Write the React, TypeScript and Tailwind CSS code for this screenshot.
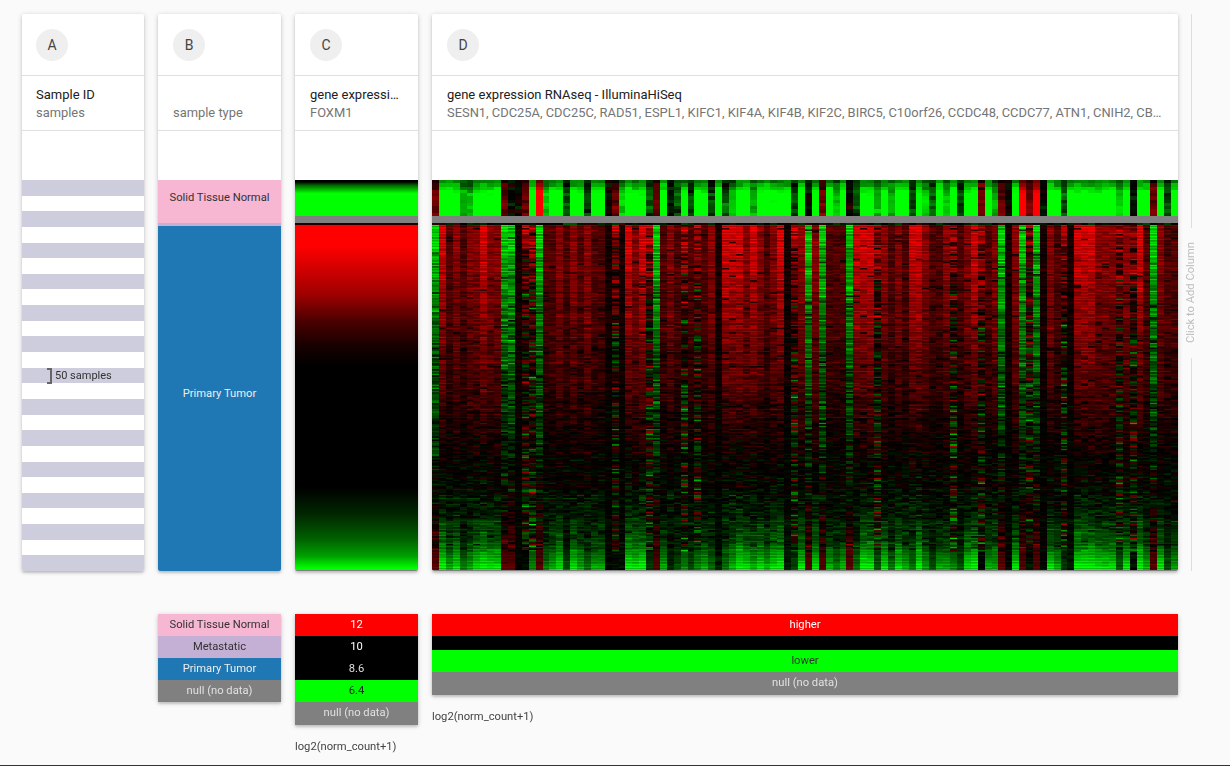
import { useEffect, useRef, type ReactNode } from "react";

const genes =
	"SESN1, CDC25A, CDC25C, RAD51, ESPL1, KIFC1, KIF4A, KIF4B, KIF2C, BIRC5, C10orf26, CCDC48, CCDC77, ATN1, CNIH2, CBX2, CENPA, CDCA5, TPX2, UBE2C";

// one char per heatmap column, read off the reference
const normalCols =
	"rGGGggGGGGrkkrGRgGGdGGdGGkrgGGGdrGkd" +
	"GdGGdGdgGGgGGGGGdGkGrGgGkdGGgGgGGdGgd" +
	"GgGdGGrGgrkGRrRkGGdGGGGGGGgGkGGrGdG";
const tumorCols =
	"LSDMDMMSMMLLKXXLDDMDMDMDDKXKSMSXLDMD" +
	"XDXDMKSSSMSMDMSKXMLMLDDDLSSSXMDMDSSMD" +
	"DMXDMSXDMLKMLXLKMDXKSSSMMMXMXSDLMDD";

const curveStops = [0, 0.1, 0.3, 0.5, 0.7, 0.85, 0.93, 1];
const curves: Record<string, { v: number[]; noise: number }> = {
	S: { v: [1, 0.82, 0.56, 0.3, 0.03, -0.18, -0.4, -0.95], noise: 0.17 },
	M: { v: [0.62, 0.55, 0.42, 0.25, 0.03, -0.15, -0.35, -0.85], noise: 0.15 },
	D: { v: [0.36, 0.34, 0.28, 0.15, 0, -0.1, -0.22, -0.65], noise: 0.13 },
	K: { v: [0.12, 0.1, 0.08, 0.03, 0, -0.03, -0.06, -0.12], noise: 0.07 },
	X: { v: [0.7, 0.35, 0.08, 0, 0, -0.05, -0.2, -0.5], noise: 0.5 },
	L: { v: [-0.95, -0.72, -0.48, -0.28, -0.1, 0.08, 0.22, 0.4], noise: 0.26 },
};
const normalLevels: Record<string, number> = {
	G: -1.2,
	g: -0.75,
	d: -0.3,
	k: -0.02,
	r: 0.42,
	R: 1.05,
};
// how far the last tumor rows go green, by the column's normal level
const bottomFactor: Record<string, number> = {
	G: 1.2,
	g: 0.85,
	d: 0.55,
	k: 0.2,
	r: 0.1,
	R: 0.1,
};

function rng(seed: number) {
	let a = seed;
	return () => {
		a = (a + 0x6d2b79f5) | 0;
		let t = Math.imul(a ^ (a >>> 15), 1 | a);
		t = (t + Math.imul(t ^ (t >>> 7), 61 | t)) ^ t;
		return ((t ^ (t >>> 14)) >>> 0) / 4294967296;
	};
}

function curveAt(values: number[], t: number) {
	for (let i = 1; i < curveStops.length; i++) {
		if (t <= curveStops[i]) {
			const f = (t - curveStops[i - 1]) / (curveStops[i] - curveStops[i - 1]);
			return values[i - 1] + (values[i] - values[i - 1]) * f;
		}
	}
	return values[values.length - 1];
}

function cellColor(v: number) {
	const c = Math.round(Math.min(1, Math.abs(v)) * 255);
	return v > 0 ? `rgb(${c},0,0)` : `rgb(0,${c},0)`;
}

const Heatmap = () => {
	const ref = useRef<HTMLCanvasElement>(null);

	useEffect(() => {
		const ctx = ref.current?.getContext("2d");
		if (!ctx) return;
		const rand = rng(42);
		const gauss = () => (rand() + rand() + rand() - 1.5) * 1.15;
		const width = 746;
		const colW = width / 108;
		const rows = 225;
		const pitch = 345 / rows;
		const rowShift = Array.from({ length: rows }, () => gauss() * 0.05);
		ctx.fillStyle = "#000";
		ctx.fillRect(0, 0, width, 391);

		for (let c = 0; c < 108; c++) {
			const x = Math.round(c * colW);
			const w = Math.round((c + 1) * colW) - x;
			const kind = normalCols[c];

			// normal samples
			const level = normalLevels[kind] * (0.92 + rand() * 0.22);
			for (let r = 0; r < 11; r++) {
				const ramp = Math.min(1, 0.42 + r * 0.14);
				const jitter = gauss() * (Math.abs(level) < 0.8 ? 0.18 : 0.12);
				ctx.fillStyle = cellColor(level * ramp + (level > 0 ? jitter : -jitter));
				ctx.fillRect(x, Math.round(r * 3.27), w, 4);
			}

			// null band
			ctx.fillStyle = "#808080";
			ctx.fillRect(x, 36, w, 7);

			// metastatic sample
			ctx.fillStyle = cellColor(gauss() * 0.25);
			ctx.fillRect(x, 43, w, 2);

			// tumor samples
			const curve = curves[tumorCols[c]];
			for (let r = 0; r < rows; r++) {
				const t = r / (rows - 1);
				let base = curveAt(curve.v, t);
				if (t > 0.85 && base < 0) base *= bottomFactor[kind];
				let v = base + rowShift[r] + gauss() * curve.noise;
				if (rand() < 0.03) v *= 0.2;
				if (t > 0.95) v = base + gauss() * 0.08;
				ctx.fillStyle = cellColor(v);
				ctx.fillRect(x, 45 + r * pitch, w, pitch);
			}

			ctx.fillStyle = "#808080";
			ctx.fillRect(x, 390, w, 1);
		}
	}, []);

	return <canvas ref={ref} width={746} height={391} className="block" />;
};

const Column = ({
	letter,
	title,
	subtitle,
	className,
	inset = "pl-[15px] pr-[15px]",
	children,
}: {
	letter: string;
	title?: string;
	subtitle: string;
	className: string;
	inset?: string;
	children: ReactNode;
}) => (
	<div
		className={`${className} h-[557px] shrink-0 overflow-hidden rounded-[2px] bg-white shadow-[0_1px_5px_rgba(0,0,0,0.2),0_2px_2px_rgba(0,0,0,0.12)]`}
	>
		<div className={`flex h-[62px] items-center border-b border-[#e0e0e0] ${inset}`}>
			<div className="flex size-8 items-center justify-center rounded-full bg-[#efefef] text-sm text-[#444]">
				{letter}
			</div>
		</div>
		<div className={`h-[55px] border-b border-[#e0e0e0] pt-[9px] leading-[19px] ${inset}`}>
			<div className="h-[19px] truncate text-[13px] text-[#212121]">{title}</div>
			<div className="truncate text-[12.9px] leading-[18px] text-[#757575]">{subtitle}</div>
		</div>
		<div className="h-[49px]" />
		{children}
	</div>
);

const LegendRow = ({
	label,
	className,
}: {
	label?: string;
	className: string;
}) => (
	<div className={`flex items-center justify-center text-[11.2px] ${className}`}>
		{label}
	</div>
);

const Caption = ({ children }: { children: string }) => (
	<div className="mt-[15px] text-[11.2px] leading-[14px] text-[#444]">
		{children}
	</div>
);

const legendShadow =
	"shadow-[0_1px_5px_rgba(0,0,0,0.2),0_2px_2px_rgba(0,0,0,0.12)]";

export default function App() {
	const stripes = Array.from({ length: 25 }, (_, i) => i);

	return (
		<div className="flex h-[766px] flex-col justify-between overflow-hidden bg-[#fafafa] font-['Roboto',sans-serif]">
			<div className="pl-[22px] pt-[14px]">
				<div className="flex gap-[14px]">
					<Column
						letter="A"
						title="Sample ID"
						subtitle="samples"
						className="w-[122px]"
						inset="pl-[14px] pr-[14px]"
					>
						<div className="relative flex h-[391px] flex-col">
							{stripes.map((i) => (
								<div
									key={i}
									className={`flex-1 ${i % 2 === 0 ? "bg-[#cdcddd]" : "bg-white"}`}
								/>
							))}
							<div className="absolute left-[25px] top-[188px] flex items-center gap-[3px] text-[11px] text-[#333]">
								<div className="h-[16px] w-[5px] border-y-2 border-r-2 border-[#666]" />
								<span>50 samples</span>
							</div>
						</div>
					</Column>
					<Column letter="B" subtitle="sample type" className="w-[123px]">
						<div className="flex h-[43px] items-center justify-center bg-[#f7b6d2] pb-[6px] text-[11.2px] text-[#333]">
							Solid Tissue Normal
						</div>
						<div className="h-[3px] bg-[#c5b0d5]" />
						<div className="flex h-[345px] items-center justify-center bg-[#1f77b4] pb-[9px] text-[11.2px] text-[#eee]">
							Primary Tumor
						</div>
					</Column>
					<Column letter="C" title="gene expression RNAseq" subtitle="FOXM1" className="w-[123px]">
						<div className="h-[36px] bg-[linear-gradient(#000_0%,#000_5%,#006800_15%,#00ff00_37%,#00ff00_100%)]" />
						<div className="h-[7px] bg-[#808080]" />
						<div className="h-[2px] bg-[#200000]" />
						<div className="h-[345px] bg-[linear-gradient(#ff0000_0%,#ff0000_6%,#a00000_20%,#4a0000_28%,#180000_35%,#000_41%,#000_76%,#002800_84%,#006000_91%,#00a000_96%,#00ff00_99.5%)]" />
						<div className="h-px bg-[#808080]" />
					</Column>
					<Column
						letter="D"
						title="gene expression RNAseq - IlluminaHiSeq"
						subtitle={genes}
						className="w-[746px]"
					>
						<Heatmap />
					</Column>
					<div className="ml-[-7px] flex h-[557px] w-[13px] flex-col items-center">
						<div className="h-[214px] w-px bg-[#ddd]" />
						<div className="flex h-[130px] items-center justify-center text-[11.2px] text-[#bdbdbd] [writing-mode:vertical-rl] rotate-180">
							Click to Add Column
						</div>
						<div className="w-px flex-1 bg-[#ddd]" />
					</div>
				</div>

				<div className="mt-[43px] flex items-start gap-[14px]">
					<div className="w-[122px] shrink-0" />
					<div className={`w-[123px] shrink-0 ${legendShadow}`}>
						<LegendRow label="Solid Tissue Normal" className="h-[22px] bg-[#f7b6d2] text-[#333]" />
						<LegendRow label="Metastatic" className="h-[22px] bg-[#c5b0d5] text-[#333]" />
						<LegendRow label="Primary Tumor" className="h-[22px] bg-[#1f77b4] pt-px text-[#eee]" />
						<LegendRow label="null (no data)" className="h-[22px] bg-[#808080] pt-px text-[#e0e0e0]" />
					</div>
					<div className="w-[123px] shrink-0">
						<div className={legendShadow}>
							<LegendRow label="12" className="h-[22px] bg-[#ff0000] text-white" />
							<LegendRow label="10" className="h-[22px] bg-black text-white" />
							<LegendRow label="8.6" className="h-[22px] bg-black pt-px text-[#ddd]" />
							<LegendRow label="6.4" className="h-[22px] bg-[#00ff00] pt-px text-[#222]" />
							<LegendRow label="null (no data)" className="h-[23px] bg-[#808080] text-[#e0e0e0]" />
						</div>
						<Caption>log2(norm_count+1)</Caption>
					</div>
					<div className="w-[746px] shrink-0">
						<div className={legendShadow}>
							<LegendRow label="higher" className="h-[22px] bg-[#ff0000] text-white" />
							<LegendRow className="h-[14px] bg-black" />
							<LegendRow label="lower" className="h-[22px] bg-[#00ff00] pt-px text-[#333]" />
							<LegendRow label="null (no data)" className="h-[23px] bg-[#808080] text-[#e0e0e0]" />
						</div>
						<Caption>log2(norm_count+1)</Caption>
					</div>
				</div>
			</div>
			<div className="h-px bg-[#333]" />
		</div>
	);
}
